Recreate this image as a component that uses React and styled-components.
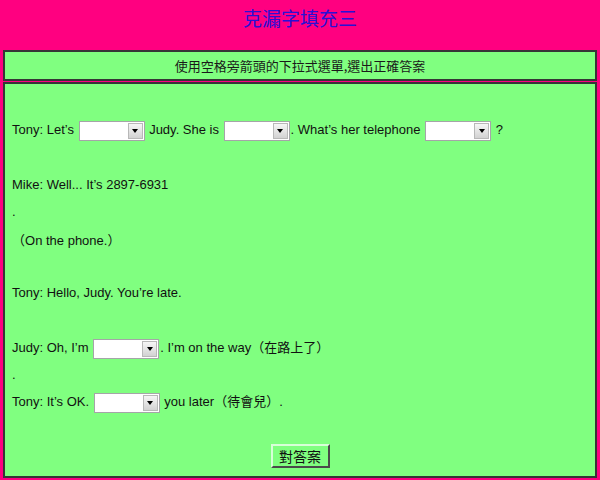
import styled, { createGlobalStyle } from "styled-components";

const GlobalStyle = createGlobalStyle`
  html, body {
    margin: 0;
    padding: 0;
    background: #ff0080;
  }
  body {
    font-family: "Liberation Sans", Arial, "Noto Sans CJK TC", sans-serif;
  }
`;

const Page = styled.div`
  width: 600px;
  height: 480px;
  box-sizing: border-box;
  padding: 0 3px 2px;
  display: flex;
  flex-direction: column;
  background: #ff0080;
  overflow: hidden;
`;

const Title = styled.h1`
  margin: 0;
  height: 50px;
  padding-top: 5px;
  box-sizing: border-box;
  text-align: center;
  font: 400 19px/26px "Noto Sans CJK TC", serif;
  color: #2a10d4;
`;

const Cell = styled.div`
  box-sizing: border-box;
  border: 2px solid #363636;
  background: #80ff80;
`;

const Header = styled(Cell)`
  height: 31px;
  display: flex;
  align-items: center;
  justify-content: center;
  font: 400 13px/1 "Noto Sans CJK TC", sans-serif;
  color: #1a1a1a;
`;

const Panel = styled(Cell)`
  flex: 1;
  margin-top: 1px;
  padding: 35px 7px 0;
  font-size: 13px;
  color: #111;
`;

const Line = styled.div`
  margin-top: ${(p) => p.$gap || 0}px;
  height: 22px;
  line-height: 22px;
  white-space: nowrap;
`;

const Note = styled.span`
  font-family: "Noto Sans CJK TC", sans-serif;
`;

const SelectBox = styled.label`
  display: inline-flex;
  vertical-align: middle;
  width: 66px;
  height: 20px;
  box-sizing: border-box;
  margin: 0 1px;
  padding: 1px;
  border: 1px solid #a5a5a8;
  background: #fff;
`;

const Field = styled.select`
  flex: 1;
  min-width: 0;
  appearance: none;
  border: 0;
  outline: 0;
  padding: 0;
  background: transparent;
  font: inherit;
`;

const Arrow = styled.span`
  width: 15px;
  flex: none;
  box-sizing: border-box;
  border: 1px solid #b8b8b8;
  background: linear-gradient(#f6f6f6, #d2d2d2);
  display: flex;
  align-items: center;
  justify-content: center;

  &::after {
    content: "";
    border-left: 3.5px solid transparent;
    border-right: 3.5px solid transparent;
    border-top: 4px solid #000;
  }
`;

const CheckButton = styled.button`
  display: block;
  margin: 32px auto 0;
  width: 59px;
  height: 24px;
  padding: 0;
  background: #80ff80;
  border: 2px solid;
  border-color: #d8ffd8 #4a4a4a #4a4a4a #d8ffd8;
  font: 400 14px/1 "Noto Sans CJK TC", sans-serif;
  color: #111;
`;

const Blank = () => (
  <SelectBox>
    <Field defaultValue="">
      <option value="" />
    </Field>
    <Arrow />
  </SelectBox>
);

export default function App() {
  return (
    <Page>
      <GlobalStyle />
      <Title>克漏字填充三</Title>
      <Header>使用空格旁箭頭的下拉式選單,選出正確答案</Header>
      <Panel>
        <Line>
          Tony: Let’s <Blank /> Judy. She is <Blank />. What’s her telephone{" "}
          <Blank /> ?
        </Line>
        <Line $gap={33}>Mike: Well... It’s 2897-6931</Line>
        <Line $gap={5}>.</Line>
        <Line $gap={6}>
          <Note>（</Note>On the phone.<Note>）</Note>
        </Line>
        <Line $gap={31}>Tony: Hello, Judy. You’re late.</Line>
        <Line $gap={32}>
          Judy: Oh, I’m <Blank />. I’m on the way<Note>（在路上了）</Note>
        </Line>
        <Line $gap={6}>.</Line>
        <Line $gap={4}>
          Tony: It’s OK. <Blank /> you later<Note>（待會兒）</Note>.
        </Line>
        <CheckButton>對答案</CheckButton>
      </Panel>
    </Page>
  );
}
